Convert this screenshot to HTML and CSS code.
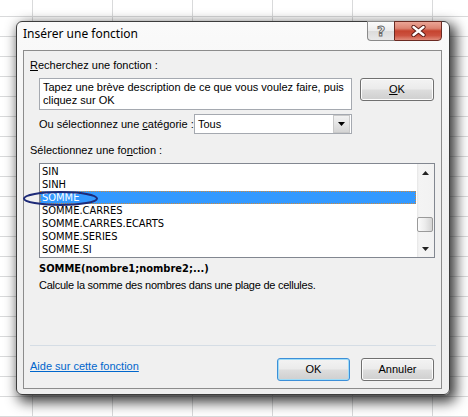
FILE: index.html
```html
<!DOCTYPE html>
<html lang="fr">
<head>
<meta charset="utf-8">
<title>Insérer une fonction</title>
<link rel="stylesheet" href="styles.css">
</head>
<body>
<div class="window">
  <div class="titlebar">
    <div class="title">Insérer une fonction</div>
    <div class="caption-buttons">
      <div class="cbtn help"><span class="q">?</span></div>
      <div class="cbtn close">
        <svg width="15" height="12" viewBox="0 0 15 12" aria-hidden="true">
          <path d="M2.5 2 L12.5 10 M12.5 2 L2.5 10" stroke="#5a1a14" stroke-width="4.2" stroke-linecap="round"/>
          <path d="M2.5 2 L12.5 10 M12.5 2 L2.5 10" stroke="#ffffff" stroke-width="2.4" stroke-linecap="round"/>
        </svg>
      </div>
    </div>
  </div>
  <div class="client">
    <div class="label"><u>R</u>echerchez une fonction :</div>
    <div class="search-row">
      <div class="search-box">Tapez une brève description de ce que vous voulez faire, puis<br>cliquez sur OK</div>
      <div class="btn btn-go"><u>O</u>K</div>
    </div>
    <div class="cat-row">
      <div class="cat-label">Ou sélectionnez une <u>c</u>atégorie :</div>
      <div class="select">
        <span class="select-value">Tous</span>
        <span class="select-btn">
          <svg width="7" height="4" viewBox="0 0 7 4" aria-hidden="true"><path d="M0 0 H7 L3.5 4 Z" fill="#000"/></svg>
        </span>
      </div>
    </div>
    <div class="label label-fn">Sélectionnez une fo<u>n</u>ction :</div>
    <div class="listbox">
      <ul class="items">
        <li>SIN</li>
        <li>SINH</li>
        <li class="selected">SOMME</li>
        <li>SOMME.CARRES</li>
        <li>SOMME.CARRES.ECARTS</li>
        <li>SOMME.SERIES</li>
        <li>SOMME.SI</li>
      </ul>
      <div class="scrollbar">
        <div class="sb-arrow">
          <svg width="7" height="4" viewBox="0 0 7 4" aria-hidden="true"><path d="M0 4 H7 L3.5 0 Z" fill="#222"/></svg>
        </div>
        <div class="sb-track"><div class="sb-thumb"></div></div>
        <div class="sb-arrow">
          <svg width="7" height="4" viewBox="0 0 7 4" aria-hidden="true"><path d="M0 0 H7 L3.5 4 Z" fill="#222"/></svg>
        </div>
      </div>
    </div>
    <div class="signature">SOMME(nombre1;nombre2;...)</div>
    <div class="desc">Calcule la somme des nombres dans une plage de cellules.</div>
    <div class="spacer"></div>
    <div class="separator"></div>
    <div class="footer">
      <a class="help-link" href="#">Aide sur cette fonction</a>
      <div class="footer-buttons">
        <div class="btn btn-default">OK</div>
        <div class="btn">Annuler</div>
      </div>
    </div>
  </div>
  <svg class="annotation" width="78" height="17" viewBox="0 0 78 17" aria-hidden="true">
    <ellipse cx="38.5" cy="8.5" rx="36.5" ry="6.5" fill="none" stroke="#1d2a78" stroke-width="2"/>
  </svg>
</div>
</body>
</html>
```

FILE: styles.css
```css
html, body {
  margin: 0;
  padding: 0;
}

body {
  width: 468px;
  height: 417px;
  overflow: hidden;
  box-sizing: border-box;
  padding: 21px 0 0 16px;
  background-color: #ffffff;
  background-image:
    linear-gradient(to right, #d9dadb 1px, transparent 1px),
    linear-gradient(to bottom, #d9dadb 1px, transparent 1px);
  background-size: 80px 100%, 100% 20px;
  background-position: 32px 0, 0 16px;
  font-family: "Liberation Sans", Arial, sans-serif;
  font-size: 11px;
  color: #000;
}

.window {
  position: relative;
  box-sizing: border-box;
  width: 434px;
  height: 374px;
  border: 1px solid #3c3c3c;
  border-radius: 6px;
  background: linear-gradient(#fafafa, #f1f1f1 40%, #eeeeee);
  box-shadow: 4px 5px 13px 2px rgba(0, 0, 0, 0.78);
  padding: 0 7px 5px 6px;
  display: flex;
  flex-direction: column;
}

.titlebar {
  height: 28px;
  display: flex;
  justify-content: space-between;
  align-items: flex-start;
}

.title {
  font-family: "Noto Sans", "Open Sans", sans-serif;
  font-size: 12px;
  line-height: 16px;
  padding-top: 4px;
  color: #000;
}

.caption-buttons {
  display: flex;
  margin-top: -1px;
}

.cbtn {
  box-sizing: border-box;
  height: 20px;
  display: flex;
  align-items: center;
  justify-content: center;
}

.help {
  width: 27px;
  border: 1px solid #8a8a8a;
  border-right: none;
  border-radius: 0 0 0 4px;
  background: linear-gradient(#fbfbfb, #ececec 48%, #dcdcdc 52%, #e9e9e9);
}

.q {
  font-family: "DejaVu Sans", sans-serif;
  font-size: 14px;
  font-weight: bold;
  line-height: 14px;
  color: #fafafa;
  -webkit-text-stroke: 1px #6a6a6a;
}

.close {
  width: 48px;
  border: 1px solid #6b2a22;
  border-radius: 0 0 4px 0;
  background: linear-gradient(#eba596, #dc8472 35%, #c5432f 50%, #cc5240 75%, #e08c7b);
}

.client {
  box-sizing: border-box;
  height: 339px;
  border: 1px solid #8c8c8c;
  background: #f0f0f0;
  padding: 8px 7px 7px 6px;
  display: flex;
  flex-direction: column;
}

.label {
  line-height: 13px;
}

.search-row {
  margin-top: 6px;
  padding-left: 9px;
  display: flex;
  align-items: flex-start;
}

.search-box {
  box-sizing: border-box;
  width: 313px;
  height: 32px;
  border: 1px solid #a5a9b0;
  background: #fff;
  padding: 2px 3px;
  line-height: 13px;
}

.btn {
  box-sizing: border-box;
  width: 73px;
  height: 23px;
  border: 1px solid #707070;
  border-radius: 3px;
  background: linear-gradient(#f3f3f3, #ebebeb 48%, #dddddd 52%, #cfcfcf);
  box-shadow: inset 0 0 0 1px #fcfcfc;
  display: flex;
  align-items: center;
  justify-content: center;
  line-height: 13px;
  color: #000;
}

.btn-go {
  width: 74px;
  margin-left: 8px;
}

.cat-row {
  margin-top: 4px;
  padding-left: 9px;
  display: flex;
  align-items: center;
  height: 20px;
}

.cat-label {
  width: 155px;
  line-height: 13px;
  white-space: nowrap;
}

.select {
  box-sizing: border-box;
  width: 158px;
  height: 20px;
  border: 1px solid #a5a9b0;
  background: #fff;
  display: flex;
  align-items: center;
  justify-content: space-between;
}

.select-value {
  padding-left: 3px;
  line-height: 13px;
}

.select-btn {
  box-sizing: border-box;
  width: 17px;
  height: 18px;
  margin-right: 1px;
  border: 1px solid #c9c9c9;
  background: linear-gradient(#f2f2f2, #e4e4e4 50%, #d5d5d5);
  display: flex;
  align-items: center;
  justify-content: center;
}

.label-fn {
  margin-top: 10px;
}

.listbox {
  box-sizing: border-box;
  margin-top: 6px;
  margin-left: 9px;
  width: 396px;
  height: 95px;
  border: 1px solid #828790;
  background: #fff;
  display: flex;
}

.items {
  list-style: none;
  margin: 0;
  padding: 1px 0 0 0;
  flex: 1;
  font-family: "DejaVu Sans Condensed", "Liberation Sans", sans-serif;
}

.items li {
  box-sizing: border-box;
  height: 13px;
  padding-left: 2px;
  border: 1px solid transparent;
  border-left: none;
  line-height: 11px;
}

.items li.selected {
  background: #3399ff;
  color: #fff;
  border: 1px dotted #d08a3c;
  padding-left: 1px;
}

.scrollbar {
  width: 17px;
  margin-left: 1px;
  display: flex;
  flex-direction: column;
  background: linear-gradient(to right, #e6e6e6, #f4f4f4 2px, #f2f2f2);
}

.sb-arrow {
  height: 17px;
  display: flex;
  align-items: center;
  justify-content: center;
}

.sb-track {
  flex: 1;
}

.sb-thumb {
  box-sizing: border-box;
  margin-top: 36px;
  width: 16px;
  height: 15px;
  border: 1px solid #9a9a9a;
  border-radius: 2px;
  background: linear-gradient(to right, #fbfbfb, #ececec 50%, #d4d4d4);
}

.signature {
  margin-top: 4px;
  padding-left: 9px;
  line-height: 13px;
  font-family: "DejaVu Sans Condensed", "Liberation Sans", sans-serif;
  font-weight: bold;
}

.desc {
  margin-top: 4px;
  padding-left: 9px;
  line-height: 13px;
  letter-spacing: -0.25px;
}

.spacer {
  flex: 1;
}

.separator {
  height: 1px;
  margin: 0 -2px 0 0;
  background: #d5dde5;
}

.footer {
  margin-top: 12px;
  height: 23px;
  display: flex;
  align-items: flex-start;
}

.help-link {
  margin-top: 2px;
  line-height: 13px;
  color: #0066cc;
  text-decoration: underline;
}

.footer-buttons {
  margin-left: auto;
  display: flex;
  gap: 11px;
}

.btn-default {
  border-color: #3c8fd8;
  box-shadow: inset 0 0 0 1px #9fdcf7;
}

.annotation {
  position: absolute;
  left: 5px;
  top: 168px;
}
```
